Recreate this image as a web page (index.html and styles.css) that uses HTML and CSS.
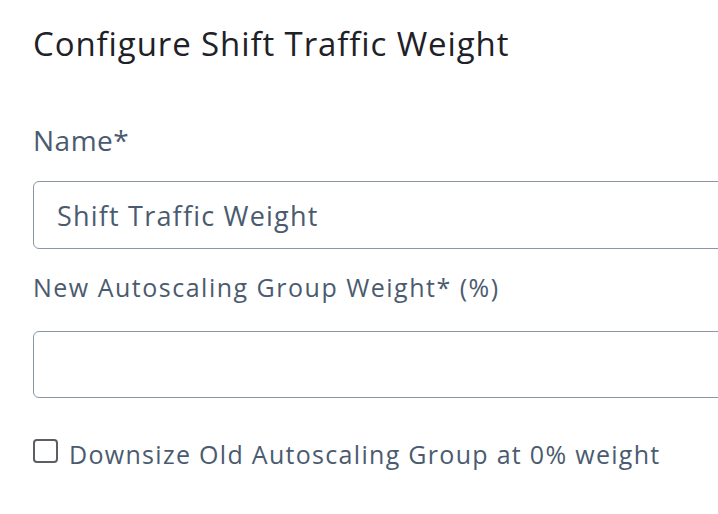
FILE: index.html
```html
<!DOCTYPE html>
<html lang="en">
<head>
    <meta charset="UTF-8">
    <title>Configure Shift Traffic Weight</title>
    <link rel="stylesheet" href="styles.css">
</head>
<body>

<div class="dialog">
    <h2 class="title">Configure Shift Traffic Weight</h2>

    <div class="field">
        <label class="label label-lg" for="name">Name*</label>
        <input class="text-input" type="text" id="name" value="Shift Traffic Weight">
    </div>

    <div class="field field-weight">
        <label class="label" for="weight">New Autoscaling Group Weight* (%)</label>
        <input class="text-input" type="text" id="weight">
    </div>

    <label class="check-row">
        <span class="check-box"></span>
        <span class="check-text">Downsize Old Autoscaling Group at 0% weight</span>
    </label>
</div>

</body>
</html>
```

FILE: styles.css
```css
body { margin: 0; background: #fff; font-family: "Open Sans", Lato, sans-serif; overflow: hidden; }
.dialog { padding: 22px 0 0 33px; }
.title { margin: 0; font-size: 33px; line-height: 44px; font-weight: 400; letter-spacing: 0.9px; color: #1e2126; }
.field { display: flex; flex-direction: column; }
.label { color: #4b5b6f; font-size: 25px; line-height: 32px; letter-spacing: 1.5px; }
.label-lg { font-size: 28px; line-height: 36px; font-weight: 500; letter-spacing: 0.5px; margin-top: 56px; }
.field-weight .label { margin-top: 22px; }
.text-input { box-sizing: border-box; width: 760px; height: 68px; margin-top: 23px; padding: 0 23px; border: 1.5px solid #8a95a8; border-radius: 6px; font-family: inherit; font-size: 27px; letter-spacing: 1.2px; color: #4b5b6f; outline: none; }
.field-weight .text-input { margin-top: 28px; height: 67px; }
.check-row { display: flex; align-items: center; gap: 11px; margin-top: 34px; }
.check-box { width: 21px; height: 20px; border: 2px solid #5b5e63; border-radius: 4px; flex: none; }
.check-text { color: #4b5b6f; font-size: 25px; line-height: 32px; letter-spacing: 1.3px; margin-top: 6px; }
```
